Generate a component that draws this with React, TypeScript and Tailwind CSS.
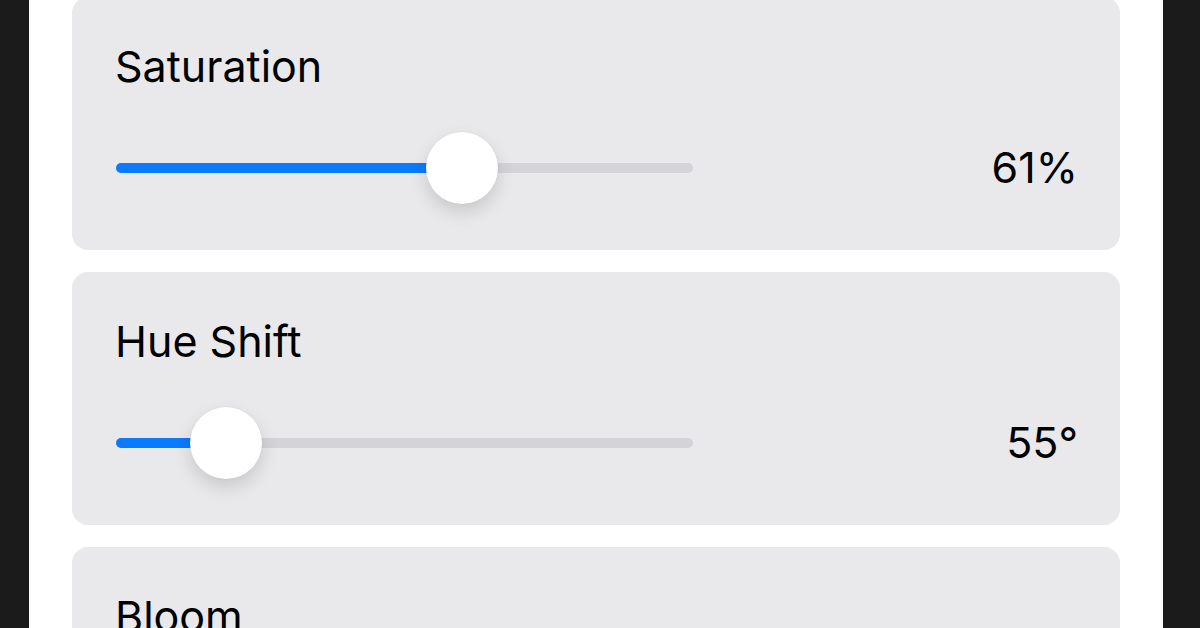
const sliders = [
  { label: "Saturation", text: "61%", pos: 346 },
  { label: "Hue Shift", text: "55°", pos: 110 },
  { label: "Bloom", text: "40%", pos: 240 },
];

function SliderCard({ label, text, pos }: (typeof sliders)[number]) {
  return (
    <div className="h-[253px] shrink-0 rounded-[16px] bg-[#e9e9eb] pl-[43px] pr-[42px] pt-[48px]">
      <div className="text-[43px] leading-none text-black">{label}</div>
      <div className="mt-[44px] flex h-[72px] items-center justify-between">
        <div className="relative ml-px h-[10px] w-[577px] rounded-full bg-[#d4d4d8]">
          <div
            className="absolute left-0 top-0 h-full rounded-full bg-[#0a7aff]"
            style={{ width: pos }}
          />
          <div
            className="absolute top-1/2 h-[72px] w-[72px] -translate-x-1/2 -translate-y-1/2 rounded-full bg-white shadow-[0_0_0_0.5px_rgba(0,0,0,0.04),0_8px_18px_rgba(0,0,0,0.14)]"
            style={{ left: pos }}
          />
        </div>
        <div className="-mt-[2px] text-[43px] leading-none text-black">{text}</div>
      </div>
    </div>
  );
}

export default function App() {
  return (
    <div
      className="flex h-[628px] w-[1200px] overflow-hidden bg-[#1b1b1b]"
      style={{ fontFamily: "Inter, 'Liberation Sans', sans-serif" }}
    >
      <div className="ml-[29px] h-full w-[1134px] bg-white px-[43px]">
        <div className="-mt-[3px] flex flex-col gap-[22px]">
          {sliders.map((s) => (
            <SliderCard key={s.label} {...s} />
          ))}
        </div>
      </div>
    </div>
  );
}
